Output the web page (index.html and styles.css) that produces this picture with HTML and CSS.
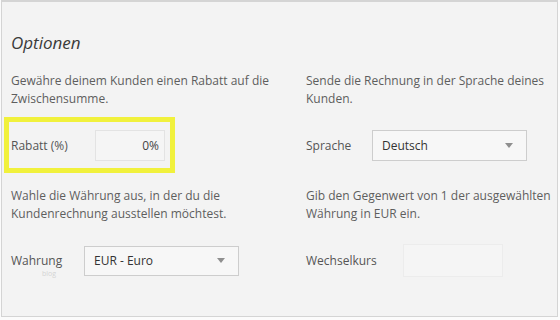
FILE: index.html
```html
<!DOCTYPE html>
<html lang="de">
<head>
  <meta charset="UTF-8">
  <title>Optionen</title>
  <link rel="stylesheet" href="styles.css">
</head>
<body>
  <div class="frame">
    <h2 class="title">Optionen</h2>
    <div class="options-grid">
      <div class="option">
        <p class="desc">Gewähre deinem Kunden einen Rabatt auf die Zwischensumme.</p>
        <div class="field-row highlight">
          <span class="field-label label-rabatt">Rabatt (%)</span>
          <div class="text-input input-rabatt">0%</div>
        </div>
      </div>
      <div class="option">
        <p class="desc">Sende die Rechnung in der Sprache deines Kunden.</p>
        <div class="field-row">
          <span class="field-label label-sprache">Sprache</span>
          <div class="select-box">
            <span>Deutsch</span>
            <span class="arrow"></span>
          </div>
        </div>
      </div>
      <div class="option">
        <p class="desc">Wahle die Währung aus, in der du die Kundenrechnung ausstellen möchtest.</p>
        <div class="field-row">
          <span class="field-label label-waehrung">Wahrung<small class="watermark">blog</small></span>
          <div class="select-box select-euro">
            <span>EUR - Euro</span>
            <span class="arrow"></span>
          </div>
        </div>
      </div>
      <div class="option">
        <p class="desc">Gib den Gegenwert von 1 der ausgewählten Währung in EUR ein.</p>
        <div class="field-row">
          <span class="field-label label-kurs">Wechselkurs</span>
          <div class="text-input input-kurs"></div>
        </div>
      </div>
    </div>
  </div>
</body>
</html>
```

FILE: styles.css
```css
body {
  margin: 0;
  padding: 0;
  background: #fbfbfb;
  font-family: "Open Sans", "Liberation Sans", sans-serif;
}

.frame {
  margin: 0 2px 0 1px;
  height: 317px;
  border: 1px solid #d4d4d4;
  border-top-width: 2px;
  background: #f3f3f3;
  box-sizing: border-box;
  padding: 30px 0 0 9px;
}

.title {
  margin: 0;
  font-size: 17px;
  line-height: 22px;
  font-weight: normal;
  font-style: italic;
  color: #3a3a3a;
}

.options-grid {
  display: grid;
  grid-template-columns: 295px 1fr;
  margin-top: 18px;
}

.desc {
  margin: 0 0 22px;
  font-size: 12px;
  line-height: 18px;
  color: #5e5e5e;
  width: 265px;
}

.option {
  margin-bottom: 26px;
}

.field-row {
  display: flex;
  align-items: center;
  height: 31px;
  font-size: 12px;
  color: #555;
}

/* yellow marker around the discount field */
.highlight {
  position: relative;
  width: 154px;
}

.highlight::after {
  content: "";
  position: absolute;
  top: -13px;
  bottom: -12px;
  left: -7px;
  right: -10px;
  border: 5px solid #f1f13c;
}

.field-label {
  position: relative;
  flex: none;
}

.label-rabatt { width: 84px; }
.label-sprache { width: 66px; }
.label-waehrung { width: 73px; }
.label-kurs { width: 97px; }

.watermark {
  position: absolute;
  left: 31px;
  top: 18px;
  font-size: 7px;
  line-height: 8px;
  color: #d4d4d4;
}

.text-input {
  box-sizing: border-box;
  height: 31px;
  border: 1px solid #e3e3e3;
  background: #f5f5f5;
  text-align: right;
  line-height: 29px;
  padding-right: 5px;
  color: #444;
}

.input-rabatt { width: 70px; }

.input-kurs {
  width: 100px;
  height: 33px;
  border-color: #ececec;
}

.select-box {
  box-sizing: border-box;
  display: flex;
  align-items: center;
  justify-content: space-between;
  width: 155px;
  height: 31px;
  padding: 0 13px 0 9px;
  border: 1px solid #cdcdcd;
  background: #f7f7f7;
  color: #333;
}

.select-euro {
  height: 30px;
}

.arrow {
  width: 0;
  height: 0;
  border-left: 4px solid transparent;
  border-right: 4px solid transparent;
  border-top: 5px solid #8f8f8f;
}
```
